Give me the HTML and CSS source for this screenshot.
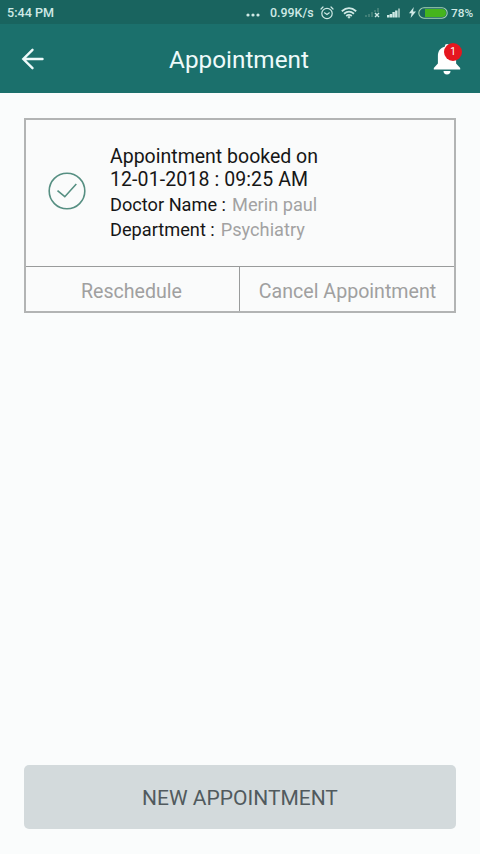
FILE: index.html
```html
<!DOCTYPE html>
<html lang="en">
<head>
<meta charset="utf-8">
<meta name="viewport" content="width=device-width">
<title>Appointment</title>
<link rel="stylesheet" href="styles.css">
</head>
<body>
<div class="status-bar">
  <span class="time">5:44 PM</span>
  <div class="status-icons">
    <svg class="dots" width="14" height="4" viewBox="0 0 14 4" fill="currentColor"><circle cx="2" cy="2" r="1.6"/><circle cx="7" cy="2" r="1.6"/><circle cx="12" cy="2" r="1.6"/></svg>
    <span class="speed">0.99K/s</span>
    <svg class="alarm" width="14" height="14" viewBox="0 0 14 14" fill="none" stroke="currentColor" stroke-width="1.2" stroke-linecap="round"><circle cx="7" cy="7.5" r="5.2"/><path d="M1 3 3 1M13 3 11 1M4.5 6.8 7 8.5 9.3 6.8"/></svg>
    <svg class="wifi" width="16" height="12" viewBox="0 0 16 12" fill="none" stroke="currentColor" stroke-width="1.8"><path d="M.8 4.2Q8-2 15.2 4.2M3 6.7Q8 2.5 13 6.7M5.2 9Q8 6.7 10.8 9"/><circle cx="8" cy="10.3" r=".8" fill="currentColor" stroke-width="1"/></svg>
    <svg class="no-signal" width="16" height="11" viewBox="0 0 16 11"><path fill="#407f77" d="M0 8h2v2H0zM3 7h2v3H3zM6 5h2v5H6zM9 3h2v2H9zM12 1h2v4h-2z"/><path d="m10 6 4 4M14 6l-4 4" stroke="currentColor" stroke-width="1.4"/></svg>
    <svg class="signal" width="14" height="11" viewBox="0 0 14 11"><path fill="currentColor" d="M0 8h2.4v2.5H0zM2.7 7h2.4v3.5H2.7zM5.4 5h2.4v5.5H5.4zM8.1 3.5h2.4v7H8.1z"/><path fill="#8fb8b2" d="M11 1.5h2v9h-2z"/></svg>
    <svg class="bolt" width="7" height="11" viewBox="0 0 7 11" fill="currentColor"><path d="M4.8 0 0 6.2h2.6L1.6 11 7 4.4H4z"/></svg>
    <svg class="battery" width="30" height="12" viewBox="0 0 30 12"><rect x=".8" y=".8" width="28.4" height="10.4" rx="5.2" fill="none" stroke="#a9d3b5" stroke-width="1.1"/><path d="M7 2h17a4 4 0 0 1 0 8H7z" fill="#45b51d"/></svg>
    <span class="percent">78%</span>
  </div>
</div>
<header class="app-bar">
  <svg class="back" width="24" height="22" viewBox="0 0 24 22" fill="none" stroke="currentColor" stroke-width="2.4" stroke-linecap="round"><path d="M21.5 11H3M11.5 1.8 2.3 11l9.2 9.2"/></svg>
  <h1>Appointment</h1>
  <div class="bell">
    <svg width="28" height="32" viewBox="0 0 28 32" fill="currentColor"><path d="M14 1a2.2 2.2 0 0 0-2.2 2.2v.6C7.1 4.9 4.9 8.5 4.9 13v7.5L.8 25v1.5h26.4V25l-4.1-4.5V13c0-4.5-2.2-8.1-6.9-9.2v-.6A2.2 2.2 0 0 0 14 1zM10.5 28a3.5 3.5 0 0 0 7 0z"/></svg>
    <span class="badge">1</span>
  </div>
</header>
<main>
  <section class="card">
    <div class="details">
      <svg class="check" width="38" height="38" viewBox="0 0 38 38" fill="none" stroke="#568f82" stroke-width="1.6"><circle cx="19" cy="19" r="17.8"/><path d="m9.5 18.7 7.3 6L28.3 12"/></svg>
      <div class="info">
        <div class="booked">Appointment booked on</div>
        <div class="booked date">12-01-2018 : 09:25 AM</div>
        <div class="row"><span>Doctor Name :</span><span class="value">Merin paul</span></div>
        <div class="row"><span>Department :</span><span class="value">Psychiatry</span></div>
      </div>
    </div>
    <div class="actions">
      <button>Reschedule</button>
      <button>Cancel Appointment</button>
    </div>
  </section>
  <button class="new">NEW APPOINTMENT</button>
</main>
</body>
</html>
```
FILE: styles.css
```css
* { box-sizing: border-box; }
body {
  margin: 0;
  height: 854px;
  display: flex;
  flex-direction: column;
  background: #fafcfc;
  font-family: Roboto, sans-serif;
  color: #161616;
  overflow: hidden;
}
svg { display: block; flex: none; }
button { font: inherit; border: 0; padding: 0; background: none; }
.status-bar {
  height: 24px;
  padding: 1px 7px 0;
  display: flex;
  align-items: center;
  justify-content: space-between;
  background: #19645f;
  color: #cfe9e5;
  font-size: 12px;
  font-weight: 500;
  white-space: nowrap;
}
.time { font-size: 12.6px; }
.status-icons { display: flex; align-items: center; }
.dots { margin: 5px 10px 0 0; }
.speed { width: 44px; font-size: 12.4px; }
.alarm { margin-left: 6px; }
.wifi { margin-left: 7px; }
.no-signal { margin-left: 8px; }
.signal { margin-left: 6px; }
.bolt { margin-left: 8px; }
.battery { margin-left: 2px; }
.percent { margin-left: 3px; width: 22px; font-size: 11.8px; }
.app-bar {
  height: 69px;
  padding: 0 19px 0 21px;
  display: grid;
  grid-template-columns: 28px 1fr 28px;
  align-items: center;
  background: #1b706c;
  color: #eefafa;
}
h1 {
  margin: 3px 4px 0 0;
  font-size: 24.3px;
  font-weight: 400;
  line-height: 28px;
  text-align: center;
}
.bell { position: relative; color: #fff; }
.badge {
  position: absolute;
  left: 11px;
  top: 0;
  width: 18px;
  height: 18px;
  border-radius: 50%;
  background: #e5171f;
  font-size: 10px;
  line-height: 18px;
  text-align: center;
}
main {
  flex: 1;
  padding: 25px 24px 25px;
  display: flex;
  flex-direction: column;
  justify-content: space-between;
}
.card {
  height: 195px;
  border: 2px solid #b2b4b4;
  background: #fafbfb;
}
.details {
  height: 146px;
  padding-left: 22px;
  display: flex;
  align-items: center;
  gap: 24px;
}
.check { margin-bottom: 4px; }
.info { white-space: nowrap; }
.booked { font-size: 19.5px; line-height: 23px; }
.date { letter-spacing: .1px; }
.row { display: flex; gap: 6px; font-size: 18.2px; line-height: 25px; }
.row:nth-child(3) { padding-top: 1px; }
.value { color: #a2a2a2; }
.actions {
  height: 45px;
  display: grid;
  grid-template-columns: 213px 1fr;
  border-top: 1px solid #999b9b;
}
.actions button { padding: 4px 2px 0 0; color: #a0a0a0; font-size: 19.6px; white-space: nowrap; }
.actions button + button { padding-right: 0; padding-left: 1px; border-left: 1px solid #999b9b; }
.new {
  height: 64px;
  padding-top: 2px;
  border-radius: 5px;
  background: #d3dadc;
  color: #515a5e;
  font-size: 21px;
}
```
